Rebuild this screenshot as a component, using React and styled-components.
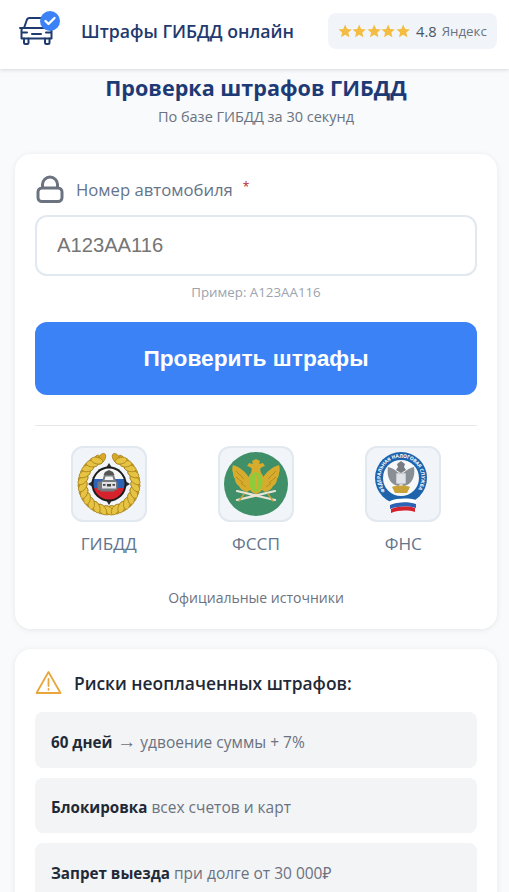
import React from "react";
import styled, { createGlobalStyle } from "styled-components";

const Global = createGlobalStyle`
  html, body { margin: 0; padding: 0; background: #f8fafc; }
  body { font-family: "Open Sans", "Noto Sans", "Liberation Sans", sans-serif; height: 892px; overflow: hidden; }
  * { box-sizing: border-box; }
`;

const Header = styled.header`
  height: 69px;
  background: #fff;
  box-shadow: 0 1px 4px rgba(0, 0, 0, 0.14);
  display: flex;
  align-items: center;
  justify-content: space-between;
  padding: 0 12px 8px 19px;
`;

const Brand = styled.div`
  display: flex;
  align-items: center;
  gap: 18px;
`;

const BrandName = styled.span`
  font-size: 17.7px;
  font-weight: 600;
  color: #1e3a6e;
  white-space: nowrap;
`;

const Rating = styled.div`
  width: 169px;
  height: 36px;
  background: #f1f5f9;
  border-radius: 8px;
  display: flex;
  align-items: center;
  padding-left: 10px;
`;

const Stars = styled.span`
  display: flex;
  width: 72px;
  margin-right: 6px;
`;

const Score = styled.span`
  font-size: 14.7px;
  color: #4b5563;
  margin-right: 5px;
`;

const Source = styled.span`
  font-size: 13.3px;
  color: #6b7280;
`;

const Main = styled.main`
  padding: 4px 12px 0 15px;
`;

const Title = styled.h1`
  margin: 0;
  text-align: center;
  font-size: 21.6px;
  line-height: 30px;
  font-weight: 700;
  color: #1e3a75;
`;

const Subtitle = styled.p`
  margin: 5px 0 28px;
  text-align: center;
  font-size: 14.5px;
  line-height: 18px;
  color: #6b7280;
`;

const Card = styled.section`
  background: #fff;
  border-radius: 16px;
  box-shadow: 0 1px 6px rgba(15, 23, 42, 0.08);
  padding: 20px 20px ${(p) => p.$bottom || 20}px;
  margin-bottom: 20px;
`;

const FieldLabel = styled.label`
  display: flex;
  align-items: center;
  height: 30px;
  margin-bottom: 11px;
  font-size: 16.7px;
  color: #64748b;
`;

const LabelIcon = styled.svg`
  width: 30px;
  height: 30px;
  margin-right: 11px;
`;

const Required = styled.span`
  color: #b91c1c;
  font-size: 12px;
  margin: -5px 0 0 10px;
`;

const PlateInput = styled.input`
  display: block;
  width: 100%;
  height: 61px;
  padding: 0 20px;
  border: 2px solid #e2e8f0;
  border-radius: 12px;
  background: #fff;
  font-family: "Liberation Sans", Arial, sans-serif;
  font-size: 20.2px;
  outline: none;

  &::placeholder { color: #757575; opacity: 1; }
`;

const Hint = styled.p`
  margin: 8px 0 21px;
  text-align: center;
  font-size: 13.3px;
  line-height: 17px;
  color: #9ca3af;
`;

const SubmitButton = styled.button`
  display: block;
  width: 100%;
  height: 73px;
  border: 0;
  border-radius: 12px;
  background: #3b82f6;
  color: #fff;
  font-family: "Liberation Sans", Arial, sans-serif;
  font-size: 22.7px;
  font-weight: 700;
`;

const Divider = styled.hr`
  border: 0;
  border-top: 1px solid #e5e7eb;
  margin: 30px 0 20px;
`;

const Sources = styled.div`
  display: grid;
  grid-template-columns: repeat(3, 1fr);
`;

const SourceItem = styled.div`
  display: flex;
  flex-direction: column;
  align-items: center;
`;

const EmblemBox = styled.div`
  width: 76px;
  height: 76px;
  border: 2px solid #e2e8f0;
  border-radius: 12px;
  background: #f1f5f9;
  display: flex;
  align-items: center;
  justify-content: center;
`;

const SourceName = styled.span`
  margin-top: 10px;
  font-size: 17.2px;
  line-height: 24px;
  color: #64748b;
`;

const SourcesNote = styled.p`
  margin: 32px 0 0;
  text-align: center;
  font-size: 14px;
  line-height: 19px;
  color: #6b7280;
`;

const RiskHeading = styled.h2`
  display: flex;
  align-items: center;
  gap: 12px;
  margin: 0 0 16px;
  height: 27px;
  font-size: 17.4px;
  font-weight: 600;
  color: #1f2937;
`;

const RiskList = styled.ul`
  list-style: none;
  margin: 0;
  padding: 0;
  display: flex;
  flex-direction: column;
  gap: 10px;
`;

const RiskItem = styled.li`
  height: 55.5px;
  padding: 4px 16px 0;
  display: flex;
  align-items: center;
  background: #f3f4f6;
  border-radius: 8px;
  font-size: 15.5px;
  color: #6b7280;
  white-space: pre;
`;

const RiskStrong = styled.strong`
  color: #1f2937;
  font-size: 15.2px;
  font-weight: 700;
`;

const RiskArrow = styled.span`
  font-size: 19px;
  line-height: 1;
`;

function CarLogo() {
  return (
    <svg width="44" height="46" viewBox="0 0 44 46" fill="none">
      <g transform="translate(-1 -6)" stroke="#1e3a6e" strokeWidth="2" strokeLinecap="round" strokeLinejoin="round">
        <path d="M2 26h4l3-8.5c.5-1 1.2-1.5 2.300-1.500h14c1.100 0 1.800.5 2.300 1.500l3 8.500h4" />
        <path d="M5 26h26c1.500 0 2.500 1 2.500 2.500v8h-30v-8C3.500 27 4 26 5 26z" />
        <path d="M4 30.500h5M28 30.500h5M14 32h9" />
        <path d="M6 36.500v4c0 1 .6 1.500 1.500 1.500h1.500c1 0 1.500-.5 1.500-1.500v-4M27 36.500v4c0 1 .5 1.500 1.500 1.500h1.500c1 0 1.500-.5 1.500-1.500v-4" />
      </g>
      <circle cx="31" cy="13" r="10" fill="#3b82f6" />
      <path d="M26.500 13l3 3 6-6" stroke="#fff" strokeWidth="2.400" strokeLinecap="round" strokeLinejoin="round" />
    </svg>
  );
}

function Star() {
  return (
    <svg width="14.400" height="14" viewBox="0 0 24 24">
      <path fill="#f4bc41" d="M12 1l3.300 7.500 8.200.8-6.200 5.400 1.900 8L12 18.500l-7.200 4.200 1.900-8L.5 9.300l8.200-.8z" />
    </svg>
  );
}

// листья венка: две ветви от низа к верху
const wreathAngles = [6, 20, 34, 48, 62, 76, 90, 104, 118, 132, 146, 158];

function GibddEmblem() {
  return (
    <svg width="66" height="64" viewBox="0 0 66 64">
      {wreathAngles.map((a) => [1, -1].map((side) => (
        <g key={`${a}${side}`} transform={`translate(33 32) rotate(${side * (180 - a)}) translate(0 -24.5)`}>
          <ellipse cx={side * -3} cy="0" rx="6" ry="3.300" fill="#d8a927" stroke="#a07c18" strokeWidth=".7" transform={`rotate(${side * 35})`} />
          <ellipse cx={side * 3} cy="0" rx="6" ry="3.300" fill="#e6c342" stroke="#a07c18" strokeWidth=".7" transform={`rotate(${side * -35})`} />
        </g>
      )))}
      <circle cx="33" cy="32" r="17.500" fill="#1c1c1c" />
      <path d="M33 11l2.500 4h-5zM33 53l2.500-4h-5zM12 32l4-2.500v5zM54 32l-4-2.500v5z" fill="#2a2a2a" />
      <clipPath id="gibddInner"><circle cx="33" cy="32" r="15.500" /></clipPath>
      <g clipPath="url(#gibddInner)">
        <path d="M17 16h32v11H17z" fill="#f6f6f6" />
        <path d="M17 27h32v9H17z" fill="#2d62b5" />
        <path d="M17 36h32v12H17z" fill="#d6222c" />
      </g>
      <path d="M29 20l4-2 4 2 1.500 3h-11z" fill="#555" />
      <path d="M26 29l2-6h10l2 6 1.500 1v8h-3v1.500h-14V38h-3v-8z" fill="#777a7e" />
      <path d="M28.500 28l1-3.500h7l1 3.500z" fill="#f2f3f5" />
      <path d="M26 30h14v6.500H26z" fill="#dfe1e4" />
      <path d="M27 32h2.500v1.800H27zM36.500 32H39v1.800h-2.500zM31 32h4v2.500h-4z" fill="#444" />
    </svg>
  );
}

function FsspEmblem() {
  return (
    <svg width="64" height="64" viewBox="0 0 64 64">
      <circle cx="32" cy="32" r="32" fill="#3f9069" />
      <path d="M26 27C22 20 16 15 9 13c-1 3-1 6 0 8 0 2 1 5 2 6 0 3 2 6 4 7 1 3 4 5 8 6l4-3z" fill="#d7ac2d" />
      <path d="M38 27c4-7 10-12 17-14 1 3 1 6 0 8 0 2-1 5-2 6 0 3-2 6-4 7-1 3-4 5-8 6l-4-3z" fill="#d7ac2d" />
      <path d="M12 19l8 8M12 25l7 6M17 31l5 4M52 19l-8 8M52 25l-7 6M47 31l-5 4" stroke="#a8841e" strokeWidth=".8" />
      <path d="M28 9l4-2 4 2-1 3 4-1 2 3-3 1-2 2 1 4h-10l1-4-2-2-3-1 2-3 4 1z" fill="#d7ac2d" />
      <ellipse cx="32" cy="30" rx="7.500" ry="10.500" fill="#8ecb3c" stroke="#d7ac2d" strokeWidth="1.600" />
      <path d="M31 23h2v14h-2z" fill="#d7ac2d" />
      <path d="M32 40l-4 5h8z" fill="#d7ac2d" />
      <path d="M13 39l38 9M51 39l-38 9" stroke="#e9e4d5" strokeWidth="2.200" strokeLinecap="round" />
      <path d="M20 42l-5 7M44 42l5 7" stroke="#c9a33a" strokeWidth="1.400" strokeLinecap="round" />
    </svg>
  );
}

function FnsEmblem() {
  return (
    <svg width="66" height="66" viewBox="0 0 66 66">
      <defs>
        <path id="fnsArc" d="M17.300 42.200A20.500 20.500 0 1 1 48.700 42.200" />
      </defs>
      <g transform="translate(-2 -2)">
        <circle cx="33" cy="29" r="26" fill="#1d64ad" />
        <circle cx="33" cy="29" r="18" fill="#f7f8fa" />
        <text fontSize="4.900" fontWeight="700" fill="#fff" fontFamily="Open Sans, sans-serif" textLength="90" lengthAdjust="spacing">
          <textPath href="#fnsArc">ФЕДЕРАЛЬНАЯ НАЛОГОВАЯ СЛУЖБА</textPath>
        </text>
        <path d="M33 28c-3-6-8-9-13-10-1 6 0 12 4 16 2 2 5 3 7 3zM33 28c3-6 8-9 13-10 1 6 0 12-4 16-2 2-5 3-7 3z" fill="#8a8f96" />
        <path d="M29 15l4-3 4 3-1 3 2 3-5 3-5-3 2-3z" fill="#777c83" />
        <path d="M28 24h10v11H28z" fill="#dfe3e8" stroke="#8a8f96" strokeWidth=".6" />
        <path d="M24 38c4-2 14-2 18 0l-3 6H27z" fill="#c9a33a" />
      </g>
      <path d="M20 50c8-3 18-3 26-1v4c-8-2-18-2-26 1z" fill="#fff" />
      <path d="M20 54c8-3 18-3 26-1v4c-8-2-18-2-26 1z" fill="#2d62b5" />
      <path d="M21 58c8-3 17-3 24-1v4c-7-2-16-2-24 1z" fill="#d6222c" />
    </svg>
  );
}

const sources = [
  { name: "ГИБДД", Emblem: GibddEmblem },
  { name: "ФССП", Emblem: FsspEmblem },
  { name: "ФНС", Emblem: FnsEmblem },
];

const risks = [
  { strong: "60 дней", arrow: true, rest: " удвоение суммы + 7%" },
  { strong: "Блокировка", rest: " всех счетов и карт" },
  { strong: "Запрет выезда", rest: " при долге от 30 000₽" },
];

export default function App() {
  return (
    <>
      <Global />
      <Header>
        <Brand>
          <CarLogo />
          <BrandName>Штрафы ГИБДД онлайн</BrandName>
        </Brand>
        <Rating>
          <Stars>
            {[0, 1, 2, 3, 4].map((i) => <Star key={i} />)}
          </Stars>
          <Score>4.8</Score>
          <Source>Яндекс</Source>
        </Rating>
      </Header>
      <Main>
        <Title>Проверка штрафов ГИБДД</Title>
        <Subtitle>По базе ГИБДД за 30 секунд</Subtitle>
        <Card $bottom={22}>
          <FieldLabel>
            <LabelIcon viewBox="0 0 30 30" fill="none" stroke="#6b7280" strokeWidth="3">
              <rect x="3" y="14" width="24" height="13.500" rx="4" />
              <path d="M7.500 14v-3.500a7.500 7.500 0 0 1 15 0V14" />
            </LabelIcon>
            Номер автомобиля
            <Required>*</Required>
          </FieldLabel>
          <PlateInput placeholder="А123АА116" />
          <Hint>Пример: А123АА116</Hint>
          <SubmitButton>Проверить штрафы</SubmitButton>
          <Divider />
          <Sources>
            {sources.map(({ name, Emblem }) => (
              <SourceItem key={name}>
                <EmblemBox><Emblem /></EmblemBox>
                <SourceName>{name}</SourceName>
              </SourceItem>
            ))}
          </Sources>
          <SourcesNote>Официальные источники</SourcesNote>
        </Card>
        <Card>
          <RiskHeading>
            <svg width="27" height="25" viewBox="0 0 27 25" fill="none" stroke="#e8a63c" strokeWidth="1.800" strokeLinejoin="round" strokeLinecap="round">
              <path d="M13.500 2L1.500 23h24z" />
              <path d="M13.500 9v7M13.500 19v.8" />
            </svg>
            Риски неоплаченных штрафов:
          </RiskHeading>
          <RiskList>
            {risks.map((risk) => (
              <RiskItem key={risk.strong}>
                <RiskStrong>{risk.strong}</RiskStrong>
                {risk.arrow && <RiskArrow> →</RiskArrow>}
                {risk.rest}
              </RiskItem>
            ))}
          </RiskList>
        </Card>
      </Main>
    </>
  );
}
